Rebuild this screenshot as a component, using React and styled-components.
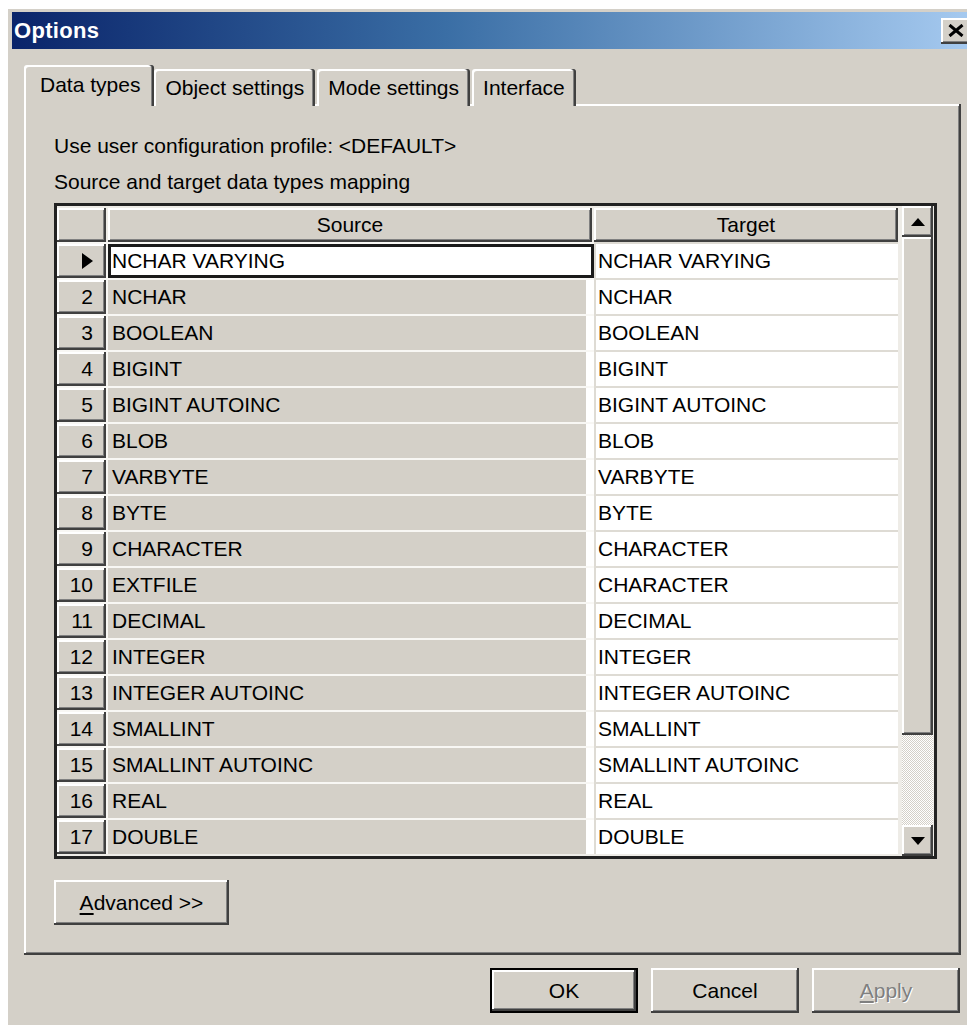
import React from 'react';
import styled, { createGlobalStyle, css } from 'styled-components';

const GlobalStyle = createGlobalStyle`
  html, body {
    margin: 0;
    padding: 0;
    background: #ffffff;
    overflow: hidden;
  }
  body {
    font-family: "Liberation Sans", Arial, sans-serif;
    font-size: 21px;
    color: #000;
  }
`;

const FACE = '#d4d0c8';

const raised = css`
  box-shadow: inset -2px -2px #404040, inset 2px 2px #ffffff, inset -3px -3px #808080;
`;

const Window = styled.div`
  margin: 7px 0 0 6px;
  width: 973px;
  height: 1040px;
  box-sizing: border-box;
  padding: 5px 6px;
  background: ${FACE};
  box-shadow: inset 2px 2px #ffffff;
`;

const TitleBar = styled.div`
  height: 37px;
  display: flex;
  align-items: center;
  justify-content: space-between;
  padding-left: 2px;
  background: linear-gradient(to right, #0a246a 0%, #3a6ea5 45%, #a6caf0 100%);
`;

const Title = styled.span`
  color: #ffffff;
  font-weight: bold;
  font-size: 22px;
  letter-spacing: 0.3px;
`;

const CloseButton = styled.div`
  width: 29px;
  height: 26px;
  margin-right: 3px;
  display: flex;
  align-items: center;
  justify-content: center;
  background: ${FACE};
  ${raised};
`;

const Content = styled.div`
  padding: 16px 12px 0 12px;
`;

const TabStrip = styled.div`
  display: flex;
  align-items: flex-end;
  height: 41px;
  margin-bottom: -2px;
`;

const Tab = styled.div`
  height: ${p => (p.$active ? 41 : 37)}px;
  box-sizing: border-box;
  padding: ${p => (p.$active ? '8px 14px 0 16px' : '7px 11px 0 11px')};
  margin-right: ${p => (p.$active ? 0 : 2)}px;
  display: flex;
  align-items: flex-start;
  background: ${FACE};
  border-radius: 3px 3px 0 0;
  box-shadow: inset -2px 0 #404040, inset -3px 0 #808080, inset 2px 2px #ffffff;
  position: ${p => (p.$active ? 'relative' : 'static')};
  z-index: ${p => (p.$active ? 1 : 'auto')};
  white-space: nowrap;
`;

const TabPanel = styled.div`
  height: 851px;
  box-sizing: border-box;
  padding: 24px 24px 30px 30px;
  background: ${FACE};
  ${raised};
`;

const Caption = styled.div`
  line-height: 36px;
  white-space: nowrap;
`;

const Grid = styled.div`
  margin-top: 3px;
  width: 883px;
  height: 656px;
  box-sizing: border-box;
  border: 3px solid #222222;
  background: #eeece7;
  display: flex;
`;

const GridBody = styled.div`
  width: 841px;
  display: flex;
  flex-direction: column;
`;

const GridRow = styled.div`
  height: 36px;
  display: flex;
  background: ${p => (p.$header ? '#eeece7' : '#f8f7f4')};
`;

const IndicatorCell = styled.div`
  width: 49px;
  height: 34px;
  margin: 2px 2px 0 0;
  box-sizing: border-box;
  padding-right: 13px;
  display: flex;
  align-items: center;
  justify-content: flex-end;
  background: ${FACE};
  ${raised};
`;

const HeaderCell = styled.div`
  width: ${p => p.$w}px;
  height: 34px;
  margin: 2px ${p => p.$gap || 0}px 0 0;
  display: flex;
  align-items: center;
  justify-content: center;
  background: ${FACE};
  ${raised};
`;

const SourceCell = styled.div`
  width: 486px;
  height: 34px;
  margin-top: 2px;
  box-sizing: border-box;
  padding-left: 4px;
  display: flex;
  align-items: center;
  white-space: nowrap;
  background: ${p => (p.$focused ? '#ffffff' : FACE)};
  border-right: 8px solid #ffffff;
  ${p =>
    p.$focused &&
    css`
      border: 3px solid #1a1a1a;
      padding-left: 1px;
    `}
`;

const TargetCell = styled.div`
  width: 304px;
  height: 36px;
  box-sizing: border-box;
  padding-left: 2px;
  display: flex;
  align-items: center;
  white-space: nowrap;
  background: #ffffff;
  border-top: 2px solid #dedbd4;
  border-left: 2px solid #dedbd4;
`;

const ScrollBar = styled.div`
  width: 31px;
  margin-left: 4px;
  display: flex;
  flex-direction: column;
`;

const ScrollButton = styled.div`
  height: 31px;
  display: flex;
  align-items: center;
  justify-content: center;
  background: ${FACE};
  ${raised};
`;

const ScrollThumb = styled.div`
  height: ${p => p.$h}px;
  background: ${FACE};
  ${raised};
`;

const ScrollTrack = styled.div`
  flex: 1;
  background-color: #ffffff;
  background-image: repeating-conic-gradient(${FACE} 0 25%, #ffffff 0 50%);
  background-size: 2px 2px;
`;

const PushButton = styled.div`
  width: ${p => p.$w || 148}px;
  height: 45px;
  box-sizing: border-box;
  display: flex;
  align-items: center;
  justify-content: center;
  background: ${FACE};
  color: ${p => (p.$disabled ? '#808080' : '#000')};
  text-shadow: ${p => (p.$disabled ? '1px 1px #ffffff' : 'none')};
  white-space: nowrap;
  ${raised};
  ${p =>
    p.$default &&
    css`
      border: 2px solid #000;
    `}
`;

const AdvancedWrap = styled.div`
  margin-top: 21px;
`;

const ButtonRow = styled.div`
  margin-top: 13px;
  display: flex;
  justify-content: flex-end;
  gap: 13px;
  padding-right: 1px;
`;

const Mnemonic = styled.span`
  text-decoration: underline;
  text-underline-offset: 3px;
`;

const rows = [
  ['NCHAR VARYING', 'NCHAR VARYING'],
  ['NCHAR', 'NCHAR'],
  ['BOOLEAN', 'BOOLEAN'],
  ['BIGINT', 'BIGINT'],
  ['BIGINT AUTOINC', 'BIGINT AUTOINC'],
  ['BLOB', 'BLOB'],
  ['VARBYTE', 'VARBYTE'],
  ['BYTE', 'BYTE'],
  ['CHARACTER', 'CHARACTER'],
  ['EXTFILE', 'CHARACTER'],
  ['DECIMAL', 'DECIMAL'],
  ['INTEGER', 'INTEGER'],
  ['INTEGER AUTOINC', 'INTEGER AUTOINC'],
  ['SMALLINT', 'SMALLINT'],
  ['SMALLINT AUTOINC', 'SMALLINT AUTOINC'],
  ['REAL', 'REAL'],
  ['DOUBLE', 'DOUBLE'],
];

const tabs = ['Data types', 'Object settings', 'Mode settings', 'Interface'];

const CloseGlyph = () => (
  <svg width="16" height="13" viewBox="0 0 16 13">
    <path d="M1.5 1 L14.5 12 M14.5 1 L1.5 12" stroke="#000" strokeWidth="3" />
  </svg>
);

const RowPointer = () => (
  <svg width="11" height="16" viewBox="0 0 11 16">
    <polygon points="0,0 11,8 0,16" fill="#000" />
  </svg>
);

const Arrow = ({ up }) => (
  <svg width="14" height="8" viewBox="0 0 14 8">
    <polygon points={up ? '0,8 14,8 7,0' : '0,0 14,0 7,8'} fill="#000" />
  </svg>
);

export default function App() {
  return (
    <>
      <GlobalStyle />
      <Window>
        <TitleBar>
          <Title>Options</Title>
          <CloseButton>
            <CloseGlyph />
          </CloseButton>
        </TitleBar>
        <Content>
          <TabStrip>
            {tabs.map((t, i) => (
              <Tab key={t} $active={i === 0}>
                {t}
              </Tab>
            ))}
          </TabStrip>
          <TabPanel>
            <Caption>Use user configuration profile: &lt;DEFAULT&gt;</Caption>
            <Caption>Source and target data types mapping</Caption>
            <Grid>
              <GridBody>
                <GridRow $header>
                  <HeaderCell $w={49} $gap={2} />
                  <HeaderCell $w={484} $gap={2}>Source</HeaderCell>
                  <HeaderCell $w={304}>Target</HeaderCell>
                </GridRow>
                {rows.map(([src, tgt], i) => (
                  <GridRow key={i}>
                    <IndicatorCell>{i === 0 ? <RowPointer /> : i + 1}</IndicatorCell>
                    <SourceCell $focused={i === 0}>{src}</SourceCell>
                    <TargetCell>{tgt}</TargetCell>
                  </GridRow>
                ))}
              </GridBody>
              <ScrollBar>
                <ScrollButton>
                  <Arrow up />
                </ScrollButton>
                <ScrollThumb $h={498} />
                <ScrollTrack />
                <ScrollButton>
                  <Arrow />
                </ScrollButton>
              </ScrollBar>
            </Grid>
            <AdvancedWrap>
              <PushButton $w={175}>
                <Mnemonic>A</Mnemonic>dvanced &gt;&gt;
              </PushButton>
            </AdvancedWrap>
          </TabPanel>
          <ButtonRow>
            <PushButton $default>OK</PushButton>
            <PushButton>Cancel</PushButton>
            <PushButton $disabled>
              <Mnemonic>A</Mnemonic>pply
            </PushButton>
          </ButtonRow>
        </Content>
      </Window>
    </>
  );
}
